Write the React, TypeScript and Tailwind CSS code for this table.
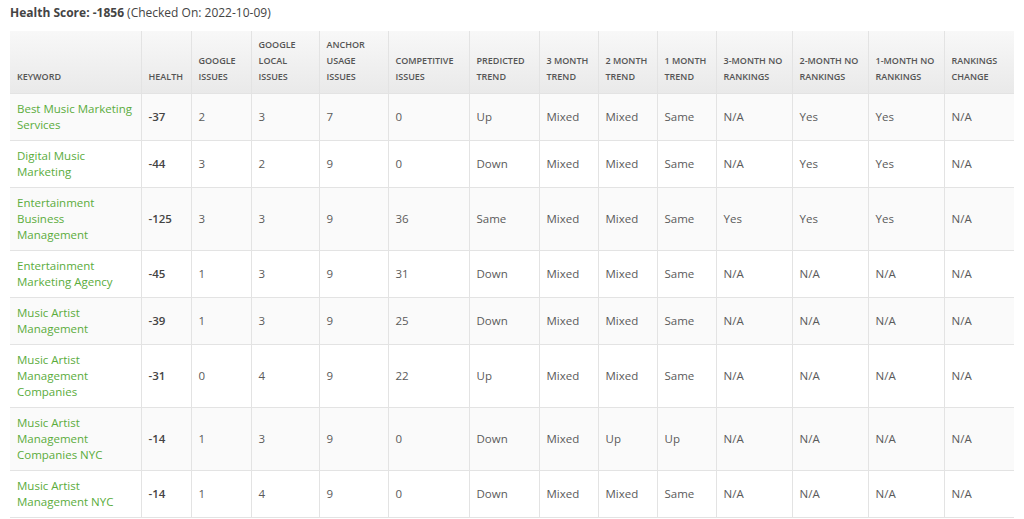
type Row = {
  keyword: string;
  health: string;
  google: string;
  local: string;
  anchor: string;
  competitive: string;
  predicted: string;
  m3: string;
  m2: string;
  m1: string;
  nr3: string;
  nr2: string;
  nr1: string;
  change: string;
};

const columns = [
  { label: "Keyword", width: 131 },
  { label: "Health", width: 50 },
  { label: "Google Issues", width: 60 },
  { label: "Google Local Issues", width: 68 },
  { label: "Anchor Usage Issues", width: 69 },
  { label: "Competitive Issues", width: 81 },
  { label: "Predicted Trend", width: 70 },
  { label: "3 Month Trend", width: 59 },
  { label: "2 Month Trend", width: 59 },
  { label: "1 Month Trend", width: 59 },
  { label: "3-Month No Rankings", width: 76 },
  { label: "2-Month No Rankings", width: 76 },
  { label: "1-Month No Rankings", width: 76 },
  { label: "Rankings Change", width: 70 },
];

const rows: Row[] = [
  { keyword: "Best Music Marketing Services", health: "-37", google: "2", local: "3", anchor: "7", competitive: "0", predicted: "Up", m3: "Mixed", m2: "Mixed", m1: "Same", nr3: "N/A", nr2: "Yes", nr1: "Yes", change: "N/A" },
  { keyword: "Digital Music Marketing", health: "-44", google: "3", local: "2", anchor: "9", competitive: "0", predicted: "Down", m3: "Mixed", m2: "Mixed", m1: "Same", nr3: "N/A", nr2: "Yes", nr1: "Yes", change: "N/A" },
  { keyword: "Entertainment Business Management", health: "-125", google: "3", local: "3", anchor: "9", competitive: "36", predicted: "Same", m3: "Mixed", m2: "Mixed", m1: "Same", nr3: "Yes", nr2: "Yes", nr1: "Yes", change: "N/A" },
  { keyword: "Entertainment Marketing Agency", health: "-45", google: "1", local: "3", anchor: "9", competitive: "31", predicted: "Down", m3: "Mixed", m2: "Mixed", m1: "Same", nr3: "N/A", nr2: "N/A", nr1: "N/A", change: "N/A" },
  { keyword: "Music Artist Management", health: "-39", google: "1", local: "3", anchor: "9", competitive: "25", predicted: "Down", m3: "Mixed", m2: "Mixed", m1: "Same", nr3: "N/A", nr2: "N/A", nr1: "N/A", change: "N/A" },
  { keyword: "Music Artist Management Companies", health: "-31", google: "0", local: "4", anchor: "9", competitive: "22", predicted: "Up", m3: "Mixed", m2: "Mixed", m1: "Same", nr3: "N/A", nr2: "N/A", nr1: "N/A", change: "N/A" },
  { keyword: "Music Artist Management Companies NYC", health: "-14", google: "1", local: "3", anchor: "9", competitive: "0", predicted: "Down", m3: "Mixed", m2: "Up", m1: "Up", nr3: "N/A", nr2: "N/A", nr1: "N/A", change: "N/A" },
  { keyword: "Music Artist Management NYC", health: "-14", google: "1", local: "4", anchor: "9", competitive: "0", predicted: "Down", m3: "Mixed", m2: "Mixed", m1: "Same", nr3: "N/A", nr2: "N/A", nr1: "N/A", change: "N/A" },
];

export default function App() {
  return (
    <div
      className="min-h-screen bg-white px-[10px] pt-[5px] text-[#555]"
      style={{ fontFamily: '"Open Sans", "DejaVu Sans", sans-serif' }}
    >
      <p className="text-[12px] leading-[16px] text-[#444]">
        <span className="font-bold">Health Score: -1856</span> (Checked On: 2022-10-09)
      </p>

      <table className="mt-[10px] w-[1004px] table-fixed border-collapse">
        <colgroup>
          {columns.map((c) => (
            <col key={c.label} style={{ width: c.width }} />
          ))}
        </colgroup>
        <thead>
          <tr className="bg-gradient-to-b from-[#f8f8f8] to-[#e9e9e9]">
            {columns.map((c, i) => (
              <th
                key={c.label}
                className={
                  "h-[62px] px-[7px] pb-[8px] pt-[6px] text-left align-bottom text-[9px] font-semibold uppercase leading-[16px] text-[#555] border-b border-[#e3e3e3] " +
                  (i < columns.length - 1 ? "border-r border-r-[#e3e3e3]" : "")
                }
              >
                {c.label}
              </th>
            ))}
          </tr>
        </thead>
        <tbody>
          {rows.map((r, idx) => {
            const cells = [
              r.google,
              r.local,
              r.anchor,
              r.competitive,
              r.predicted,
              r.m3,
              r.m2,
              r.m1,
              r.nr3,
              r.nr2,
              r.nr1,
              r.change,
            ];
            return (
              <tr
                key={r.keyword}
                className={idx % 2 === 0 ? "bg-[#fafafa]" : "bg-white"}
              >
                <td className="border-b border-r border-[#e3e3e3] px-[7px] py-[7px] align-middle text-[11.5px] leading-[16px] text-[#5aac3c]">
                  {r.keyword}
                </td>
                <td className="border-b border-r border-[#e3e3e3] px-[7px] py-[7px] align-middle text-[11.5px] font-semibold leading-[16px] text-[#444]">
                  {r.health}
                </td>
                {cells.map((v, i) => (
                  <td
                    key={i}
                    className={
                      "border-b border-[#e3e3e3] px-[7px] py-[7px] align-middle text-[11.5px] leading-[16px] text-[#5a5a5a] " +
                      (i < cells.length - 1 ? "border-r" : "")
                    }
                  >
                    {v}
                  </td>
                ))}
              </tr>
            );
          })}
        </tbody>
      </table>
    </div>
  );
}
